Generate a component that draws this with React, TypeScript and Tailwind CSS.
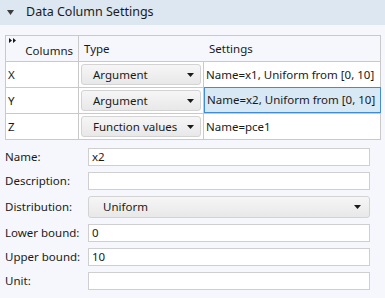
import React from 'react';

const font = { fontFamily: '"Segoe UI", "Noto Sans", "Open Sans", sans-serif' };

function Caret() {
  return (
    <svg width="7" height="4" viewBox="0 0 7 4" className="shrink-0">
      <path d="M0 0h7L3.5 4z" fill="#1a1a1a" />
    </svg>
  );
}

function Dropdown({ label, className }: { label: string; className?: string }) {
  return (
    <div
      className={`flex items-center justify-between gap-1 rounded-[3px] border border-[#d3d3d3] bg-gradient-to-b from-[#f6f6f6] to-[#e8e8e8] text-[#1a1a1a] whitespace-nowrap ${className ?? ''}`}
    >
      <span>{label}</span>
      <Caret />
    </div>
  );
}

function Field({ label, value }: { label: string; value?: string }) {
  return (
    <div className="flex items-center h-[18px]">
      <span className="w-[83px] text-[#1a1a1a]">{label}</span>
      <div className="w-[282px] h-[18px] border border-[#cfcfcf] bg-white pl-[3px] flex items-center text-[#1a1a1a]">
        {value}
      </div>
    </div>
  );
}

const rows = [
  { id: 'X', type: 'Argument', settings: 'Name=x1, Uniform from [0, 10]' },
  { id: 'Y', type: 'Argument', settings: 'Name=x2, Uniform from [0, 10]', selected: true },
  { id: 'Z', type: 'Function values', settings: 'Name=pce1' },
];

export default function App() {
  return (
    <div className="w-[385px] h-[298px] bg-[#f5f7fc] text-[11.5px] overflow-hidden" style={font}>
      {/* Section header */}
      <div className="h-[25px] bg-[#dde7f2] flex items-center pl-[7px]">
        <svg width="7" height="5" viewBox="0 0 7 5">
          <path d="M0 0h7L3.5 5z" fill="#3c3c3c" />
        </svg>
        <span className="ml-[12px] text-[12.5px] text-[#1a1a1a]">Data Column Settings</span>
      </div>

      {/* Table */}
      <div className="mt-[10px] ml-[5px] w-[376px] border border-[#c9c9c9] bg-white">
        <div className="grid grid-cols-[73px_125px_1fr] h-[25px] bg-[#f5f7fc]">
          <div className="relative border-r border-[#c9c9c9] flex items-end justify-end pr-[5px] pb-[2px]">
            <svg width="7" height="5" viewBox="0 0 7 5" className="absolute left-[3px] top-[2px]">
              <path d="M0 0l3 2.5L0 5zM4 0l3 2.5L4 5z" fill="#1a1a1a" />
            </svg>
            <span className="text-[#1a1a1a]">Columns</span>
          </div>
          <div className="flex items-center pl-[5px] text-[#1a1a1a]">Type</div>
          <div className="flex items-center pl-[5px] text-[#1a1a1a]">Settings</div>
        </div>
        {rows.map((r) => (
          <div key={r.id} className="grid grid-cols-[73px_125px_1fr] h-[26px] border-t border-[#c9c9c9]">
            <div className="border-r border-[#c9c9c9] flex items-center pl-[2px] text-[#1a1a1a]">{r.id}</div>
            <div className="border-r border-[#c9c9c9] flex items-center px-[2px]">
              <Dropdown label={r.type} className="w-[120px] h-[21px] pl-[11px] pr-[6px]" />
            </div>
            <div
              className={`flex items-center pl-[2px] text-[#1a1a1a] whitespace-nowrap ${
                r.selected ? 'bg-[#d9e8f5] border border-[#3e8ddd] -mt-px mr-[-1px]' : ''
              }`}
            >
              {r.settings}
            </div>
          </div>
        ))}
      </div>

      {/* Form */}
      <div className="mt-[8px] ml-[5px] flex flex-col gap-[6px]">
        <Field label="Name:" value="x2" />
        <Field label="Description:" />
        <div className="flex items-center h-[22px]">
          <span className="w-[83px] text-[#1a1a1a]">Distribution:</span>
          <Dropdown label="Uniform" className="w-[282px] h-[22px] pl-[14px] pr-[8px]" />
        </div>
        <Field label="Lower bound:" value="0" />
        <Field label="Upper bound:" value="10" />
        <Field label="Unit:" />
      </div>
    </div>
  );
}
